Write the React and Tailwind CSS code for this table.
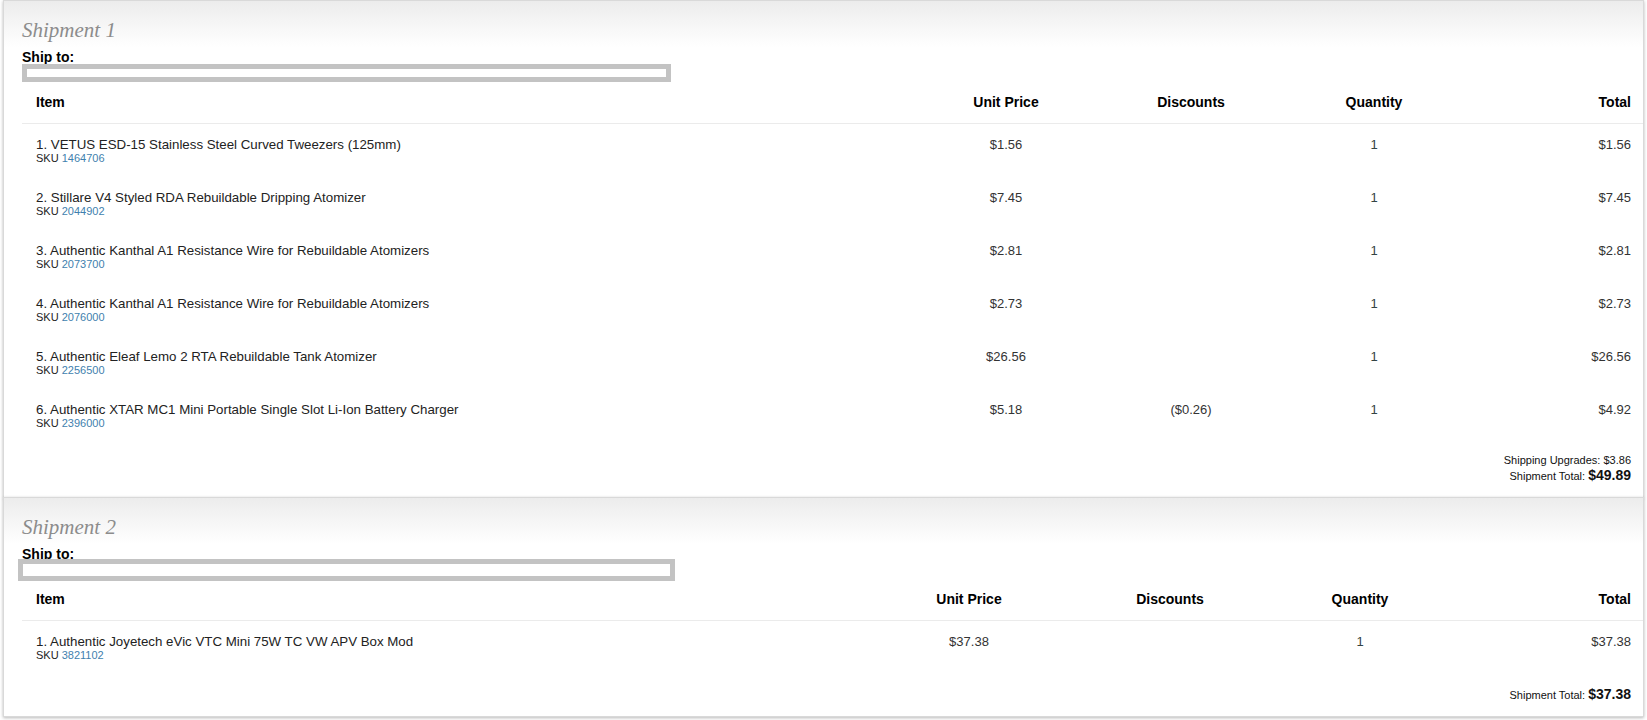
import React from "react";

const ship1 = {
  title: "Shipment 1",
  cols: ["w-[892px]", "w-[184px]", "w-[186px]", "w-[180px]", "w-[179px]"],
  box: "ml-0 w-[649px] h-[18px] -mt-[1px]",
  items: [
    { name: "VETUS ESD-15 Stainless Steel Curved Tweezers (125mm)", sku: "1464706", price: "$1.56", disc: "", qty: "1", total: "$1.56" },
    { name: "Stillare V4 Styled RDA Rebuildable Dripping Atomizer", sku: "2044902", price: "$7.45", disc: "", qty: "1", total: "$7.45" },
    { name: "Authentic Kanthal A1 Resistance Wire for Rebuildable Atomizers", sku: "2073700", price: "$2.81", disc: "", qty: "1", total: "$2.81" },
    { name: "Authentic Kanthal A1 Resistance Wire for Rebuildable Atomizers", sku: "2076000", price: "$2.73", disc: "", qty: "1", total: "$2.73" },
    { name: "Authentic Eleaf Lemo 2 RTA Rebuildable Tank Atomizer", sku: "2256500", price: "$26.56", disc: "", qty: "1", total: "$26.56" },
    { name: "Authentic XTAR MC1 Mini Portable Single Slot Li-Ion Battery Charger", sku: "2396000", price: "$5.18", disc: "($0.26)", qty: "1", total: "$4.92" },
  ],
  upgrades: "$3.86",
  total: "$49.89",
};

const ship2 = {
  title: "Shipment 2",
  cols: ["w-[841px]", "w-[212px]", "w-[190px]", "w-[190px]", "w-[188px]"],
  box: "-ml-[4px] w-[657px] h-[22px] -mt-[3px] -mb-[2px]",
  items: [
    { name: "Authentic Joyetech eVic VTC Mini 75W TC VW APV Box Mod", sku: "3821102", price: "$37.38", disc: "", qty: "1", total: "$37.38" },
  ],
  upgrades: null,
  total: "$37.38",
};

function Shipment({ data, className }) {
  return (
    <div
      className={
        "relative border border-[#d9d9d9] bg-[linear-gradient(to_bottom,#ececec,#ffffff_46px)] shadow-[0_1px_3px_rgba(0,0,0,0.28)] " +
        (className || "")
      }
    >
      <div className="pl-[18px]">
        <div className="pt-[17px] text-[21px] leading-[24px] italic text-[#8c8c8c] font-['Liberation_Serif',Georgia,serif]">
          {data.title}
        </div>
        <div className="mt-[8px] text-[14px] leading-[15px] font-bold text-black">Ship to:</div>
        <div className={"relative border-[5px] border-[#c3c3c3] bg-white " + data.box}></div>
        <table className="w-full table-fixed border-collapse">
          <colgroup>
            {data.cols.map((c, i) => (
              <col key={i} className={c} />
            ))}
          </colgroup>
          <thead>
            <tr className="border-b border-[#ebebeb]">
              <th className="pl-[14px] py-[13px] text-left text-[14px] leading-[15px] font-bold text-black">Item</th>
              <th className="py-[13px] text-center text-[14px] leading-[15px] font-bold text-black">Unit Price</th>
              <th className="py-[13px] text-center text-[14px] leading-[15px] font-bold text-black">Discounts</th>
              <th className="py-[13px] text-center text-[14px] leading-[15px] font-bold text-black">Quantity</th>
              <th className="pr-[12px] py-[13px] text-right text-[14px] leading-[15px] font-bold text-black">Total</th>
            </tr>
          </thead>
          <tbody>
            {data.items.map((it, i) => (
              <tr key={i} className="align-top">
                <td className="pl-[14px] pt-[13px] pb-[12px]">
                  <div className="text-[13.3px] leading-[15px] text-[#222]">
                    {i + 1}. {it.name}
                  </div>
                  <div className="text-[11px] leading-[13px] text-[#222]">
                    SKU <span className="text-[#3f7fae]">{it.sku}</span>
                  </div>
                </td>
                <td className="pt-[13px] text-center text-[13px] leading-[15px] text-[#333]">{it.price}</td>
                <td className="pt-[13px] text-center text-[13px] leading-[15px] text-[#333]">{it.disc}</td>
                <td className="pt-[13px] text-center text-[13px] leading-[15px] text-[#334444]">{it.qty}</td>
                <td className="pr-[12px] pt-[13px] text-right text-[13px] leading-[15px] text-[#333]">{it.total}</td>
              </tr>
            ))}
          </tbody>
        </table>
        <div className="pr-[12px] pt-[12px] pb-[13px] text-right text-[#111]">
          {data.upgrades && (
            <div className="text-[11px] leading-[13px]">Shipping Upgrades: {data.upgrades}</div>
          )}
          <div className="text-[11px] leading-[16px]">
            Shipment Total: <span className="text-[14px] font-bold">{data.total}</span>
          </div>
        </div>
      </div>
    </div>
  );
}

export default function App() {
  return (
    <div className="min-h-[720px] bg-white px-[3px] font-['Liberation_Sans',Arial,sans-serif]">
      <Shipment data={ship1} />
      <Shipment data={ship2} className="-mt-px" />
    </div>
  );
}
